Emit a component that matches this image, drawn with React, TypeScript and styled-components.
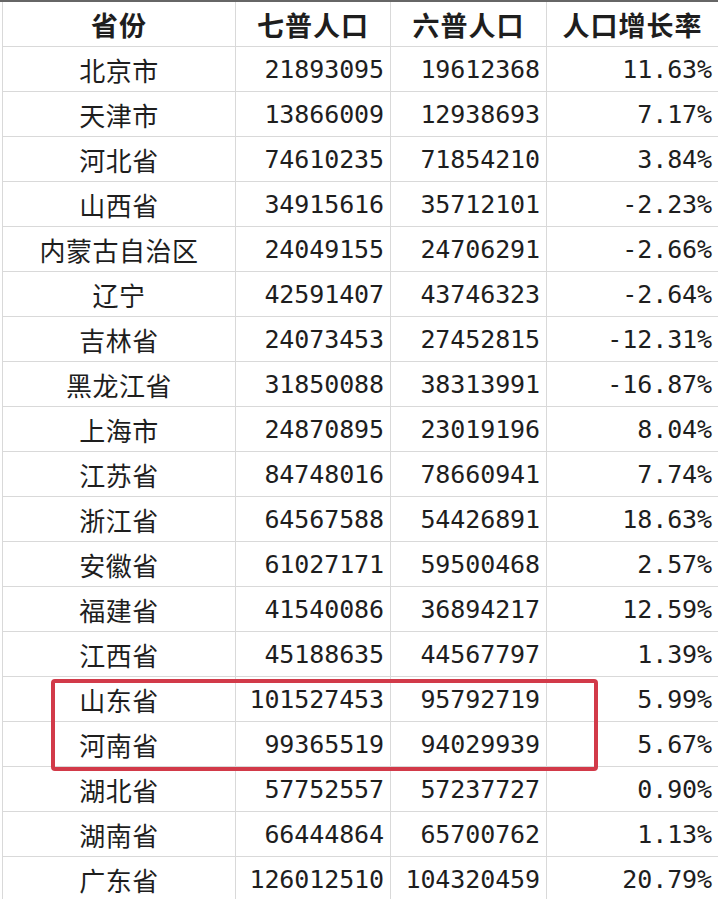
import React from "react";
import styled, { createGlobalStyle } from "styled-components";

const Global = createGlobalStyle`
  html, body { margin: 0; padding: 0; background: #ffffff; }
  body { width: 718px; height: 899px; overflow: hidden; }
`;

type Row = [string, string, string, string];

const rows: Row[] = [
  ["北京市", "21893095", "19612368", "11.63%"],
  ["天津市", "13866009", "12938693", "7.17%"],
  ["河北省", "74610235", "71854210", "3.84%"],
  ["山西省", "34915616", "35712101", "-2.23%"],
  ["内蒙古自治区", "24049155", "24706291", "-2.66%"],
  ["辽宁", "42591407", "43746323", "-2.64%"],
  ["吉林省", "24073453", "27452815", "-12.31%"],
  ["黑龙江省", "31850088", "38313991", "-16.87%"],
  ["上海市", "24870895", "23019196", "8.04%"],
  ["江苏省", "84748016", "78660941", "7.74%"],
  ["浙江省", "64567588", "54426891", "18.63%"],
  ["安徽省", "61027171", "59500468", "2.57%"],
  ["福建省", "41540086", "36894217", "12.59%"],
  ["江西省", "45188635", "44567797", "1.39%"],
  ["山东省", "101527453", "95792719", "5.99%"],
  ["河南省", "99365519", "94029939", "5.67%"],
  ["湖北省", "57752557", "57237727", "0.90%"],
  ["湖南省", "66444864", "65700762", "1.13%"],
  ["广东省", "126012510", "104320459", "20.79%"],
];

const Sheet = styled.div`
  position: relative;
  width: 718px;
  height: 899px;
  overflow: hidden;
  padding-left: 2px;
  box-sizing: border-box;
  border-top: 2px solid #666666;
`;

const Grid = styled.div`
  display: grid;
  grid-template-columns: 233px 155px 156px 172px;
  grid-auto-rows: 45px;
  border-left: 1px solid #d9d9d9;
`;

const Cell = styled.div<{ $align: "center" | "right"; $head?: boolean; $num?: boolean }>`
  display: flex;
  align-items: center;
  justify-content: ${(p) => (p.$align === "center" ? "center" : "flex-end")};
  padding: 0 ${(p) => (p.$align === "right" ? "6px" : "0")} 0 0;
  border-right: 1px solid #d9d9d9;
  border-bottom: 1px solid #d9d9d9;
  box-sizing: border-box;
  color: #1e1e1e;
  white-space: nowrap;
  font-family: ${(p) =>
    p.$num
      ? '"DejaVu Sans Mono", "Liberation Mono", monospace'
      : '"Noto Sans CJK SC", "Noto Sans", sans-serif'};
  font-size: ${(p) => (p.$num ? "25px" : p.$head ? "27px" : "26px")};
  font-weight: ${(p) => (p.$head ? 700 : 400)};
  letter-spacing: ${(p) => (p.$num ? "-0.1px" : p.$head ? "1px" : "0.5px")};
`;

const Highlight = styled.div`
  position: absolute;
  left: 51px;
  top: 677px;
  width: 547px;
  height: 92px;
  border: 4px solid #d23a49;
  border-radius: 4px;
  box-sizing: border-box;
  pointer-events: none;
`;

export default function App() {
  const headers = ["省份", "七普人口", "六普人口", "人口增长率"];
  return (
    <>
      <Global />
      <Sheet>
        <Grid>
          {headers.map((h) => (
            <Cell key={h} $align="center" $head>
              {h}
            </Cell>
          ))}
          {rows.map((r) => (
            <React.Fragment key={r[0]}>
              <Cell $align="center">{r[0]}</Cell>
              <Cell $align="right" $num>{r[1]}</Cell>
              <Cell $align="right" $num>{r[2]}</Cell>
              <Cell $align="right" $num>{r[3]}</Cell>
            </React.Fragment>
          ))}
        </Grid>
        <Highlight />
      </Sheet>
    </>
  );
}
